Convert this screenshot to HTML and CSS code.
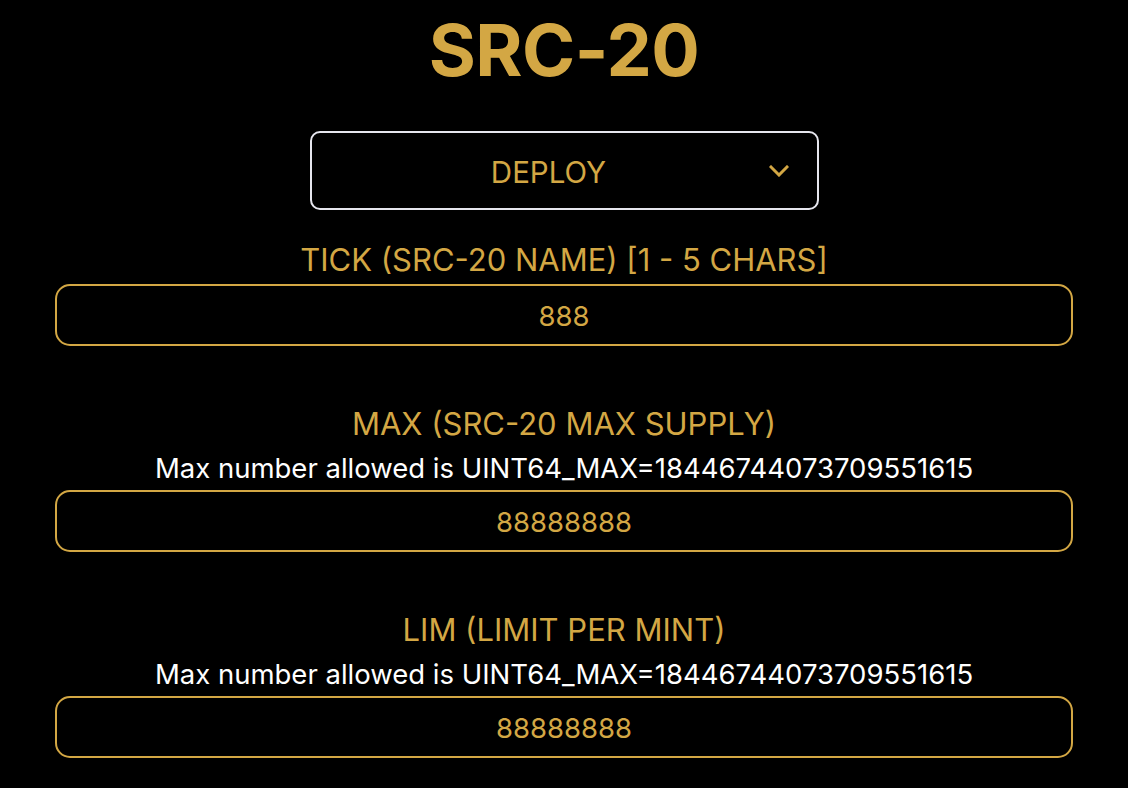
FILE: index.html
```html
<!DOCTYPE html>
<html lang="en">
<head>
<meta charset="utf-8">
<title>SRC-20</title>
<link rel="stylesheet" href="styles.css">
</head>
<body>
<main class="page">
  <h1 class="title">SRC-20</h1>
  <div class="select">
    <span class="select-text">DEPLOY</span>
    <svg class="chevron" width="20" height="12" viewBox="0 0 20 12" aria-hidden="true">
      <path d="M2 2 L10 10 L18 2" fill="none" stroke="#d3a744" stroke-width="3" stroke-linecap="square" stroke-linejoin="miter"/>
    </svg>
  </div>

  <section class="field first">
    <div class="label">TICK (SRC-20 NAME) [1 - 5 CHARS]</div>
    <div class="input">888</div>
  </section>

  <section class="field">
    <div class="label">MAX (SRC-20 MAX SUPPLY)</div>
    <div class="help">Max number allowed is UINT64_MAX=18446744073709551615</div>
    <div class="input">88888888</div>
  </section>

  <section class="field">
    <div class="label">LIM (LIMIT PER MINT)</div>
    <div class="help">Max number allowed is UINT64_MAX=18446744073709551615</div>
    <div class="input">88888888</div>
  </section>
</main>
</body>
</html>
```
FILE: styles.css
```css
html, body {
  margin: 0;
  padding: 0;
  background: #000;
}
body {
  font-family: Inter, "Noto Sans", "Liberation Sans", sans-serif;
  color: #d3a744;
}
.page {
  padding: 0 55px;
  display: flex;
  flex-direction: column;
  align-items: center;
}
.title {
  margin: 6px 0 0;
  font-size: 72px;
  line-height: 88px;
  font-weight: 700;
  letter-spacing: -0.5px;
  color: #d3a744;
}
.select {
  position: relative;
  margin-top: 37px;
  width: 509px;
  height: 79px;
  box-sizing: border-box;
  border: 2px solid #e6e6ee;
  border-radius: 10px;
  display: flex;
  align-items: center;
  justify-content: center;
}
.select-text {
  padding-right: 31px;
  font-size: 29.5px;
  line-height: 36px;
  margin-top: 2px;
}
.chevron {
  position: absolute;
  right: 28px;
  top: 32px;
}
.field {
  width: 100%;
  margin-top: 56px;
  display: flex;
  flex-direction: column;
  align-items: center;
}
.field.first {
  margin-top: 28px;
}
.label {
  font-size: 31px;
  line-height: 44px;
}
.first .label {
  margin-bottom: 2px;
}
.help {
  font-size: 27.5px;
  line-height: 44px;
  color: #fff;
}
.input {
  width: 100%;
  height: 62px;
  box-sizing: border-box;
  border: 2px solid #d3a744;
  border-radius: 15px;
  display: flex;
  align-items: center;
  justify-content: center;
  font-size: 27.5px;
  padding-top: 2px;
}
```
